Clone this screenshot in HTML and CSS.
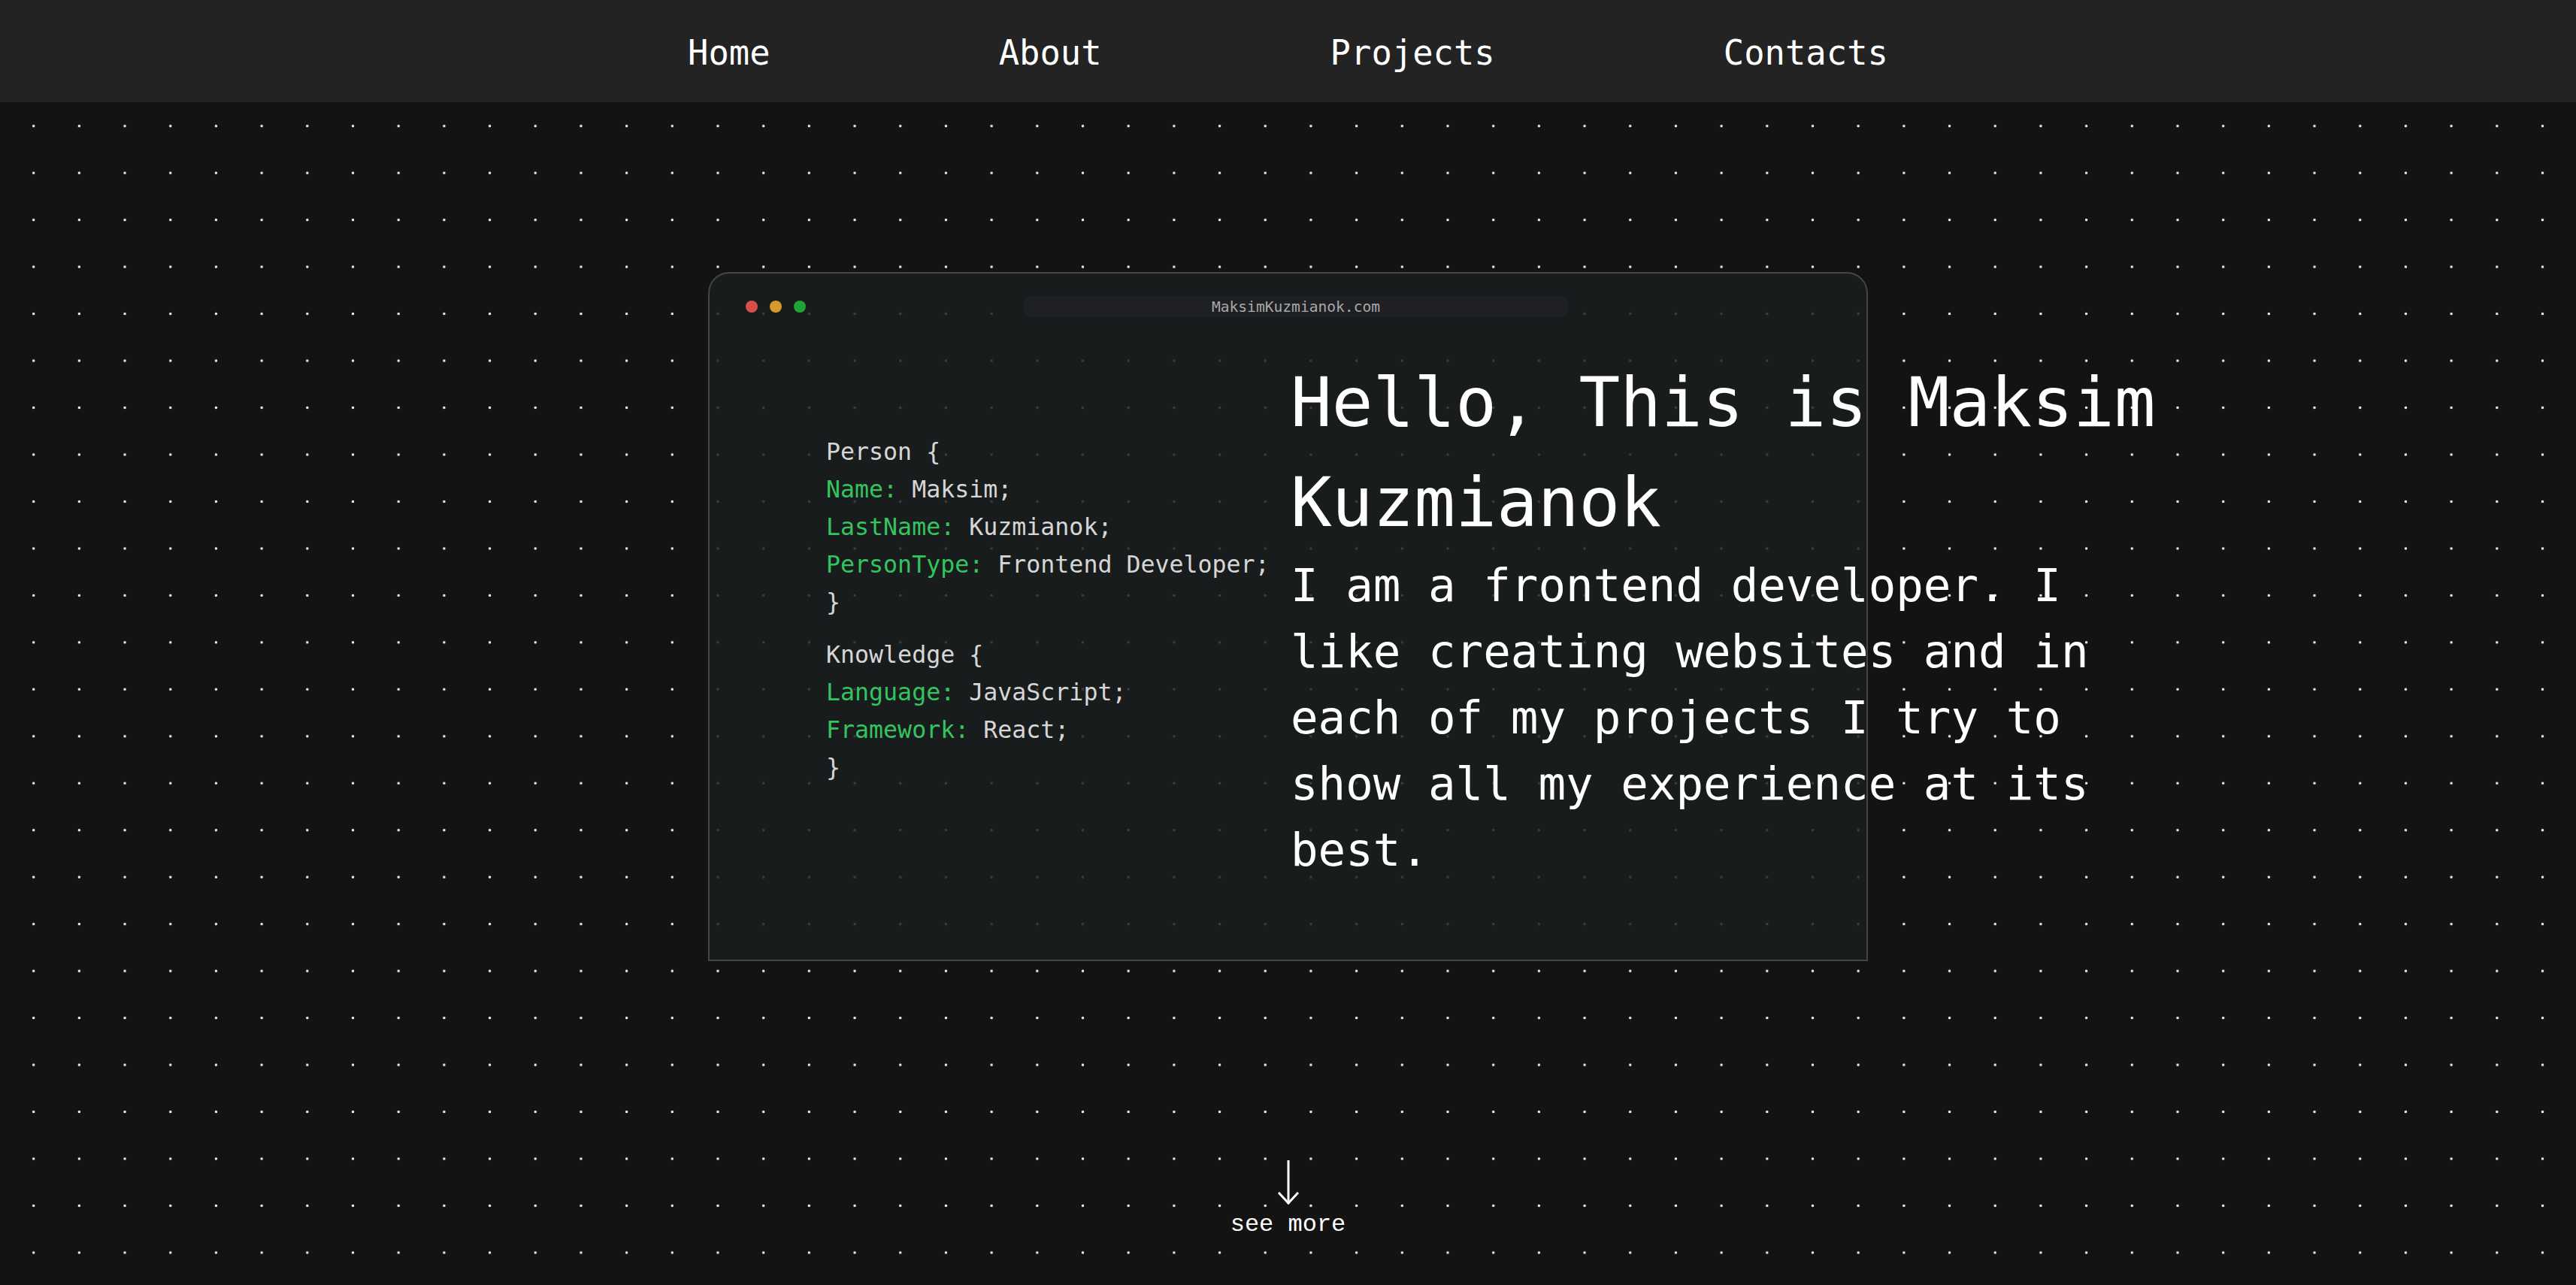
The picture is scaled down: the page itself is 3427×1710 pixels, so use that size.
FILE: index.html
```html
<!DOCTYPE html>
<html lang="en">
<head>
<meta charset="utf-8">
<title>Maksim Kuzmianok</title>
<link rel="stylesheet" href="styles.css">
</head>
<body>
<header class="nav">
  <a class="nav-link" href="#">Home</a>
  <a class="nav-link" href="#">About</a>
  <a class="nav-link" href="#">Projects</a>
  <a class="nav-link" href="#">Contacts</a>
</header>
<main class="hero">
  <section class="window">
    <div class="window-bar">
      <div class="lights">
        <span class="light red"></span>
        <span class="light yellow"></span>
        <span class="light green"></span>
      </div>
      <div class="address">MaksimKuzmianok.com</div>
    </div>
    <div class="window-body">
      <div class="code">
        <div class="code-block">
          <div class="line">Person {</div>
          <div class="line"><span class="key">Name:</span> Maksim;</div>
          <div class="line"><span class="key">LastName:</span> Kuzmianok;</div>
          <div class="line"><span class="key">PersonType:</span> Frontend Developer;</div>
          <div class="line">}</div>
        </div>
        <div class="code-block">
          <div class="line">Knowledge {</div>
          <div class="line"><span class="key">Language:</span> JavaScript;</div>
          <div class="line"><span class="key">Framework:</span> React;</div>
          <div class="line">}</div>
        </div>
      </div>
      <div class="intro">
        <h1 class="title">Hello, This is Maksim Kuzmianok</h1>
        <p class="about">I am a frontend developer. I like creating websites and in each of my projects I try to show all my experience at its best.</p>
      </div>
    </div>
  </section>
  <a class="more" href="#">
    <svg class="arrow" width="30" height="60" viewBox="0 0 30 60" aria-hidden="true">
      <line x1="15" y1="0" x2="15" y2="58" stroke="#fff" stroke-width="3"/>
      <polyline points="2,43 15,57 28,43" fill="none" stroke="#fff" stroke-width="3"/>
    </svg>
    <span class="more-text">see more</span>
  </a>
</main>
</body>
</html>
```
FILE: styles.css
```css
* { box-sizing: border-box; }

html, body {
  margin: 0;
  padding: 0;
  background: #131313;
  color: #fff;
  font-family: "DejaVu Sans Mono", "Liberation Mono", monospace;
}

.nav {
  height: 136px;
  padding-top: 5px;
  background: #232323;
  display: flex;
  justify-content: center;
  align-items: center;
  gap: 304px;
}

.nav-link {
  color: #fff;
  text-decoration: none;
  font-size: 45.5px;
  line-height: 1;
}

.hero {
  height: 1574px;
  background-color: #131313;
  background-image: radial-gradient(circle, #e8e8e8 1.4px, transparent 2.1px);
  background-size: 60.7px 62.48px;
  background-position: 14.35px 0.46px;
  display: flex;
  flex-direction: column;
  align-items: center;
  padding-top: 226px;
}

.window {
  width: 1543px;
  height: 917px;
  border: 2px solid #444546;
  border-radius: 28px 28px 0 0;
  background: rgba(27, 31, 32, 0.85);
  padding: 30px 48px 0;
}

.window-bar {
  display: flex;
  align-items: center;
  height: 28px;
}

.lights {
  display: flex;
  gap: 16px;
}

.light {
  width: 16px;
  height: 16px;
  border-radius: 50%;
}
.light.red { background: #d64f4b; }
.light.yellow { background: #d49b2b; }
.light.green { background: #21a338; }

.address {
  margin-left: 290px;
  width: 724px;
  height: 28px;
  border-radius: 10px;
  background: #1f2023;
  color: #a8a8a8;
  font-size: 19.6px;
  display: flex;
  align-items: center;
  justify-content: center;
}

.window-body {
  margin-top: 47px;
  display: grid;
  grid-template-columns: 725px 1180px;
  align-items: start;
}

.code {
  padding-left: 107px;
  padding-top: 107px;
  font-size: 31.6px;
  line-height: 50px;
  color: #d6d6d6;
  white-space: nowrap;
  display: flex;
  flex-direction: column;
  gap: 20px;
}

.key { color: #34c45f; }

.intro {
  color: #fff;
}

.title {
  margin: 0;
  font-weight: normal;
  font-size: 91px;
  line-height: 133px;
}

.about {
  margin: 0;
  font-size: 60.8px;
  line-height: 88px;
}

.more {
  margin-top: 265px;
  display: flex;
  flex-direction: column;
  align-items: center;
  color: #fff;
  text-decoration: none;
}

.arrow { display: block; }

.more-text {
  font-family: "Liberation Mono", monospace;
  font-size: 32px;
  line-height: 36px;
  margin-top: 8px;
}
```
